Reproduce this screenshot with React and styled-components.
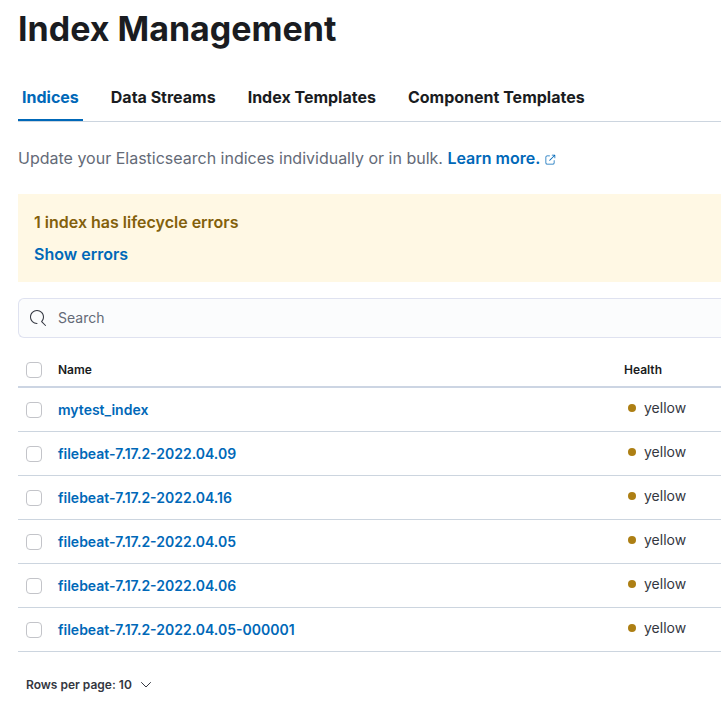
import React from "react";
import styled, { createGlobalStyle } from "styled-components";

const GlobalStyle = createGlobalStyle`
  *, *::before, *::after { box-sizing: border-box; }
  body {
    margin: 0;
    background: #fff;
    color: #343741;
    font-family: Inter, "Liberation Sans", sans-serif;
    font-size: 14px;
    overflow-x: hidden;
  }
  button, input { font-family: inherit; }
`;

const Page = styled.main`
  padding: 8px 0 24px 18px;
`;

const Title = styled.h1`
  margin: 0;
  color: #1a1c21;
  font-size: 34px;
  line-height: 42px;
  font-weight: 700;
`;

const Tabs = styled.div`
  display: flex;
  gap: 24px;
  margin-top: 24px;
  border-bottom: 1px solid #ccd5df;
`;

const Tab = styled.button`
  height: 47px;
  padding: 0 4px;
  border: 0;
  border-bottom: 2px solid ${(p) => (p.$active ? "#0068b8" : "transparent")};
  background: none;
  color: ${(p) => (p.$active ? "#0068b8" : "#1a1c21")};
  font-size: 16px;
  line-height: 24px;
  font-weight: 700;
  white-space: nowrap;
  cursor: pointer;
`;

const Intro = styled.p`
  margin: 24px 0;
  color: #646a77;
  font-size: 16px;
  line-height: 24px;
`;

const Link = styled.a`
  color: #0068b8;
  font-weight: 600;
  text-decoration: none;
  &:hover { text-decoration: underline; }
`;

const PopoutIcon = styled.svg`
  width: 12px;
  height: 12px;
  margin-left: 4px;
  vertical-align: -2px;
  fill: currentColor;
`;

const Callout = styled.section`
  display: grid;
  gap: 8px;
  padding: 16px;
  background: #fff8e4;
  font-size: 16px;
  line-height: 24px;
`;

const CalloutTitle = styled.h2`
  margin: 0;
  color: #83600b;
  font-size: inherit;
  font-weight: 600;
`;

const SearchField = styled.label`
  display: flex;
  align-items: center;
  gap: 12px;
  height: 40px;
  margin: 16px 0;
  padding: 0 11px;
  border: 1px solid #dfe2f0;
  border-right: 0;
  border-radius: 6px 0 0 6px;
  background: #fbfcfd;
`;

const SearchIcon = styled.svg`
  flex: none;
  width: 16px;
  height: 16px;
  fill: #343741;
`;

const SearchInput = styled.input`
  flex: 1;
  min-width: 0;
  padding: 0 0 2px;
  border: 0;
  outline: 0;
  background: none;
  color: #343741;
  font-size: 14px;
  &::placeholder { color: #646a77; opacity: 1; }
`;

const Table = styled.table`
  width: 100%;
  border-collapse: separate;
  border-spacing: 0;
  table-layout: fixed;
`;

const HeadCell = styled.th`
  width: ${(p) => p.$width || "auto"};
  height: 34px;
  padding: 0 8px;
  border-bottom: 2px solid #ccd5e3;
  color: #1a1c21;
  font-size: 12px;
  line-height: 20px;
  font-weight: 600;
  text-align: left;
`;

const Cell = styled.td`
  height: 44px;
  padding: 0 8px;
  border-bottom: 1px solid #ccd5df;
  line-height: 24px;
  white-space: nowrap;
`;

const HealthCell = styled(Cell)`
  padding: 8px;
  vertical-align: top;
`;

const Checkbox = styled.input`
  display: block;
  appearance: none;
  width: 16px;
  height: 16px;
  margin: 0;
  border: 1px solid #c3c4c9;
  border-radius: 4px;
  background: #fff;
  &:checked { background: #0068b8; border-color: #0068b8; }
`;

const Health = styled.div`
  display: flex;
  align-items: center;
  gap: 8px;
  padding-left: 4px;
`;

const Dot = styled.span`
  width: 8px;
  height: 8px;
  border-radius: 50%;
  background: #ad7f14;
`;

const RowsButton = styled.button`
  display: flex;
  align-items: center;
  gap: 8px;
  margin-top: 21px;
  padding: 0 8px;
  border: 0;
  background: none;
  color: #343741;
  font-size: 12px;
  line-height: 24px;
  font-weight: 600;
  cursor: pointer;
`;

const Chevron = styled.svg`
  width: 12px;
  height: 12px;
  fill: none;
  stroke: currentColor;
`;

const tabs = ["Indices", "Data Streams", "Index Templates", "Component Templates"];

const indices = [
  "mytest_index",
  "filebeat-7.17.2-2022.04.09",
  "filebeat-7.17.2-2022.04.16",
  "filebeat-7.17.2-2022.04.05",
  "filebeat-7.17.2-2022.04.06",
  "filebeat-7.17.2-2022.04.05-000001",
].map((name) => ({ name, health: "yellow" }));

export default function App() {
  return (
    <>
      <GlobalStyle />
      <Page>
        <Title>Index Management</Title>
        <Tabs role="tablist">
          {tabs.map((label, i) => (
            <Tab key={label} type="button" role="tab" aria-selected={i === 0} $active={i === 0}>
              {label}
            </Tab>
          ))}
        </Tabs>
        <Intro>
          Update your Elasticsearch indices individually or in bulk.{" "}
          <Link href="#learn-more">
            Learn more.
            <PopoutIcon viewBox="0 0 16 16" aria-hidden="true">
              <path d="M13 8.5a.5.5 0 1 1 1 0V12a2 2 0 0 1-2 2H4a2 2 0 0 1-2-2V4a2 2 0 0 1 2-2h3.5a.5.5 0 0 1 0 1H4a1 1 0 0 0-1 1v8a1 1 0 0 0 1 1h8a1 1 0 0 0 1-1V8.5zm-5.12.339a.5.5 0 1 1-.706-.707L13.305 2H10.79a.5.5 0 1 1 0-1H14.5a.5.5 0 0 1 .5.5v3.71a.5.5 0 1 1-1 0V2.72L7.88 8.838z" />
            </PopoutIcon>
          </Link>
        </Intro>
        <Callout>
          <CalloutTitle>1 index has lifecycle errors</CalloutTitle>
          <div>
            <Link href="#errors">Show errors</Link>
          </div>
        </Callout>
        <SearchField>
          <SearchIcon viewBox="0 0 16 16" aria-hidden="true">
            <path d="M11.271 11.978l3.872 3.873a.502.502 0 00.708 0 .502.502 0 000-.708l-3.565-3.564c2.38-2.747 2.267-6.923-.342-9.532-2.73-2.73-7.17-2.73-9.898 0-2.728 2.729-2.728 7.17 0 9.9a6.955 6.955 0 004.949 2.05.5.5 0 000-1 5.96 5.96 0 01-4.242-1.757 6.01 6.01 0 010-8.486 6.004 6.004 0 018.484 0 6.01 6.01 0 010 8.486.5.5 0 00.034.738z" />
          </SearchIcon>
          <SearchInput type="search" placeholder="Search" aria-label="Search" />
        </SearchField>
        <Table>
          <thead>
            <tr>
              <HeadCell $width="32px">
                <Checkbox type="checkbox" aria-label="Select all rows" />
              </HeadCell>
              <HeadCell>Name</HeadCell>
              <HeadCell $width="105px">Health</HeadCell>
            </tr>
          </thead>
          <tbody>
            {indices.map(({ name, health }) => (
              <tr key={name}>
                <Cell>
                  <Checkbox type="checkbox" aria-label={`Select ${name}`} />
                </Cell>
                <Cell>
                  <Link href={`#${name}`}>{name}</Link>
                </Cell>
                <HealthCell>
                  <Health>
                    <Dot />
                    {health}
                  </Health>
                </HealthCell>
              </tr>
            ))}
          </tbody>
        </Table>
        <RowsButton type="button" aria-haspopup="true">
          Rows per page: 10
          <Chevron viewBox="0 0 12 12" aria-hidden="true">
            <path d="M1.5 3.5 6 8l4.500-4.500" strokeLinecap="round" strokeLinejoin="round" />
          </Chevron>
        </RowsButton>
      </Page>
    </>
  );
}
